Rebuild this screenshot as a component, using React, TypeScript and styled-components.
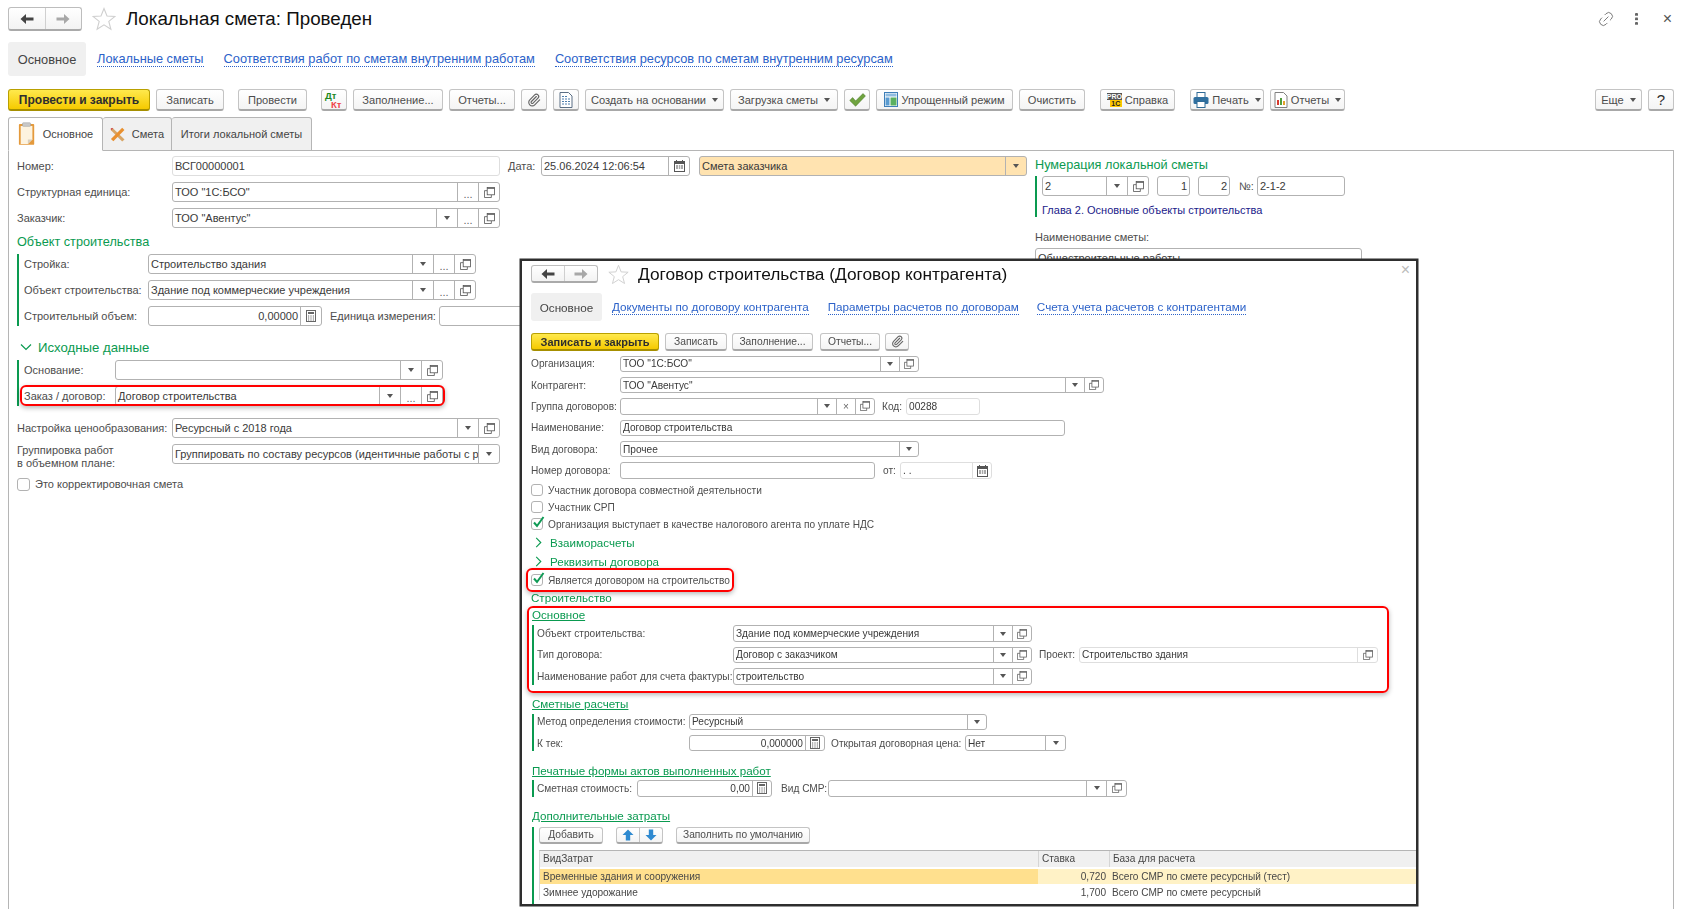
import React from "react";
import styled, { createGlobalStyle } from "styled-components";
import { Link2, Paperclip } from "lucide-react";

const GlobalStyle = createGlobalStyle`
  html, body {
    margin: 0;
    padding: 0;
    background: #fff;
    overflow: hidden;
  }
  * {
    box-sizing: border-box;
  }
  body {
    font-family: "Liberation Sans", Arial, sans-serif;
    color: #444;
  }
`;

/* ---------- icons ---------- */

const ArrowLeft = ({ color = "#444" }: { color?: string }) => (
  <svg width="14" height="12" viewBox="0 0 14 12">
    <path d="M0.5 6 L6 1 V4.4 H13.5 V7.6 H6 V11 Z" fill={color} />
  </svg>
);

const ArrowRight = () => (
  <svg width="14" height="12" viewBox="0 0 14 12">
    <path d="M13.5 6 L8 1 V4.4 H0.5 V7.6 H8 V11 Z" fill="#a8a8a8" />
  </svg>
);

const StarIcon = ({ size }: { size: number }) => (
  <svg width={size} height={size} viewBox="0 0 24 24">
    <path
      d="M12 1.5 L15 9 L23 9.4 L16.8 14.4 L18.9 22.3 L12 17.9 L5.1 22.3 L7.2 14.4 L1 9.4 L9 9 Z"
      fill="#fff"
      stroke="#cfcfcf"
      strokeWidth="1.1"
    />
  </svg>
);

const CopyIcon = ({ size }: { size: number }) => (
  <svg width={size} height={size} viewBox="0 0 12 12" fill="none" stroke="#555" strokeWidth="0.9">
    <path d="M3.5 4 H0.5 V11.5 H8 V8.5" />
    <rect x="3.5" y="0.5" width="8" height="8" fill="#fff" />
    <path d="M3.5 1.6 H11.5" />
  </svg>
);

const CalendarIcon = () => (
  <svg width="11" height="12" viewBox="0 0 11 12">
    <rect x="0.5" y="1.5" width="10" height="10" fill="#fff" stroke="#555" />
    <rect x="1" y="2" width="9" height="2" fill="#555" />
    <path d="M2.5 0 V2.5 M8.5 0 V2.5" stroke="#555" />
    <path d="M2 6 H4 M4.8 6 H6.3 M7 6 H9 M2 8 H4 M4.8 8 H6.3 M7 8 H9" stroke="#555" />
  </svg>
);

const CalcIcon = () => (
  <svg width="10" height="12" viewBox="0 0 10 12">
    <rect x="0.5" y="0.5" width="9" height="11" fill="#fff" stroke="#666" />
    <rect x="2" y="2" width="6" height="2" fill="#666" />
    <path d="M2 6 H3.2 M4.4 6 H5.6 M6.8 6 H8 M2 8 H3.2 M4.4 8 H5.6 M6.8 8 H8 M2 10 H3.2 M4.4 10 H5.6 M6.8 10 H8" stroke="#666" />
  </svg>
);

const ClipboardIcon = () => (
  <svg width="18" height="24" viewBox="0 0 20 26">
    <rect x="1" y="2" width="17" height="23" rx="1" fill="#e49a3c" />
    <path d="M3 4 H16 V19 L11 24 H3 Z" fill="#fdf3df" />
    <path d="M16 19 L11 24 V19 Z" fill="#d8cfc0" />
    <rect x="5" y="0.5" width="9" height="4" rx="1" fill="#c9c9c9" stroke="#9c9c9c" strokeWidth="0.6" />
  </svg>
);

const RulerCrossIcon = () => (
  <svg width="15" height="15" viewBox="0 0 16 16">
    <path d="M2.5 0.8 L15.5 13.2 L13 15.5 L0.5 3 Z" fill="#d8a565" />
    <path d="M13 0.8 L15.4 3.2 L3.6 15.2 L1 12.8 Z" fill="#e9902f" />
    <path d="M0.8 1 L3.6 1.4 L1.2 3.6 Z" fill="#d05252" />
  </svg>
);

const DocListIcon = () => (
  <svg width="14" height="16" viewBox="0 0 14 16">
    <path d="M1 0.5 H9.5 L13 4 V15.5 H1 Z" fill="#fff" stroke="#5b6f85" />
    <path d="M3 4.5 H8 M3 7 H11 M3 9.5 H11 M3 12 H11" stroke="#4f7fae" strokeDasharray="2 1" />
  </svg>
);

const CheckIcon = () => (
  <svg width="17" height="14" viewBox="0 0 17 14">
    <path d="M0.8 7.5 L3.6 4.6 L6.6 8 L14 0.6 L16.4 3 L6.6 13.2 Z" fill="#6fa33f" stroke="#4d7c2a" strokeWidth="0.6" />
  </svg>
);

const LayoutIcon = () => (
  <svg width="14" height="15" viewBox="0 0 14 15">
    <rect x="0.5" y="0.5" width="13" height="14" fill="#fff" stroke="#3f7fb8" />
    <rect x="1.5" y="1.5" width="11" height="3" fill="#8fbce0" />
    <rect x="1.5" y="5.5" width="4" height="8" fill="#5a9bd0" />
    <rect x="6.5" y="5.5" width="6" height="8" fill="#5bb060" />
  </svg>
);

const PrinterIcon = () => (
  <svg width="16" height="16" viewBox="0 0 16 16">
    <rect x="4" y="0.5" width="8" height="5" fill="#fff" stroke="#2f6a96" />
    <rect x="0.5" y="5" width="15" height="7" rx="1.5" fill="#2f6f9f" />
    <rect x="4" y="9.5" width="8" height="6" fill="#fff" stroke="#2f6a96" />
  </svg>
);

const ReportIcon = () => (
  <svg width="14" height="16" viewBox="0 0 14 16">
    <path d="M1 0.5 H9.5 L13 4 V15.5 H1 Z" fill="#fff" stroke="#808080" />
    <rect x="3" y="8" width="2" height="5" fill="#d83a2e" />
    <rect x="6" y="6" width="2" height="7" fill="#4f9e3c" />
    <rect x="9" y="9" width="2" height="4" fill="#e2a12b" />
  </svg>
);

const Chevron = ({ open, size }: { open?: boolean; size: number }) => (
  <svg width={size} height={size} viewBox="0 0 12 12" fill="none" stroke="#0a9a50" strokeWidth="1.2">
    <path d={open ? "M1 3.5 L6 8.5 L11 3.5" : "M3.5 1 L8.5 6 L3.5 11"} />
  </svg>
);

const ArrowVert = ({ up }: { up?: boolean }) => (
  <svg width="12" height="12" viewBox="0 0 12 12" style={{ transform: up ? "none" : "rotate(180deg)" }}>
    <path d="M6 0.5 L11.5 6 H8.2 V11.5 H3.8 V6 H0.5 Z" fill="#2f8ad0" />
  </svg>
);

/* ---------- shared parts ---------- */

const Page = styled.div`
  position: relative;
  width: 1692px;
  height: 909px;
  overflow: hidden;
  display: flex;
  flex-direction: column;
  padding: 0 18px 0 8px;
  font-size: 11px;
`;

const Header = styled.div<{ $modal?: boolean }>`
  display: flex;
  align-items: center;
  height: ${(p) => (p.$modal ? 18 : 24)}px;
  margin-top: ${(p) => (p.$modal ? 4 : 7)}px;
  flex-shrink: 0;
`;

const HistoryGroup = styled.div<{ $w: number }>`
  display: flex;
  width: ${(p) => p.$w}px;
  height: 100%;
  border: 1px solid #bdbdbd;
  border-bottom: 2px solid #aaa;
  border-radius: 3px;
  background: linear-gradient(#fff, #f3f3f3);
`;

const HistoryBtn = styled.div`
  flex: 1;
  display: flex;
  align-items: center;
  justify-content: center;
  & + & {
    border-left: 1px solid #d0d0d0;
  }
`;

const StarSlot = styled.div<{ $ml: number; $mr: number }>`
  display: flex;
  margin: 0 ${(p) => p.$mr}px 0 ${(p) => p.$ml}px;
`;

const Title = styled.div<{ $size: number }>`
  font-size: ${(p) => p.$size}px;
  color: #111;
  white-space: nowrap;
`;

const Utilities = styled.div`
  margin-left: auto;
  margin-right: 2px;
  display: flex;
  align-items: center;
  gap: 20px;
  color: #666;
`;

const DotsV = styled.div`
  width: 3px;
  height: 12px;
  margin-right: 5px;
  background: radial-gradient(circle at 1.5px 1.5px, #666 1.4px, transparent 1.6px) 0 0 / 3px 4.5px;
`;

const CloseMark = styled.div<{ $color?: string }>`
  font-size: 16px;
  line-height: 16px;
  color: ${(p) => p.$color || "#555"};
`;

const NavRow = styled.div<{ $modal?: boolean }>`
  display: flex;
  align-items: center;
  height: ${(p) => (p.$modal ? 28 : 34)}px;
  margin-top: ${(p) => (p.$modal ? 10 : 11)}px;
  font-size: ${(p) => (p.$modal ? 11.7 : 12.8)}px;
  flex-shrink: 0;
`;

const NavActive = styled.div<{ $w: number }>`
  width: ${(p) => p.$w}px;
  height: 100%;
  display: flex;
  align-items: center;
  justify-content: center;
  background: #f0f0f0;
  border-radius: 3px;
  color: #444;
`;

const NavLink = styled.a<{ $ml: number }>`
  margin-left: ${(p) => p.$ml}px;
  color: #2c62c9;
  border-bottom: 1px dotted #2c62c9;
  line-height: 14px;
  white-space: nowrap;
`;

const Toolbar = styled.div<{ $modal?: boolean }>`
  display: flex;
  height: ${(p) => (p.$modal ? 18 : 22)}px;
  margin-top: ${(p) => (p.$modal ? 12 : 13)}px;
  flex-shrink: 0;
`;

const Button = styled.div<{ $w: number; $ml?: number; $primary?: boolean; $size?: number; $strong?: boolean }>`
  width: ${(p) => p.$w}px;
  margin-left: ${(p) => (p.$ml === undefined ? 6 : p.$ml)}px;
  display: flex;
  align-items: center;
  justify-content: center;
  gap: 3px;
  flex-shrink: 0;
  white-space: nowrap;
  font-size: ${(p) => p.$size || 11.1}px;
  border-radius: 3px;
  border: 1px solid ${(p) => (p.$primary ? "#b9a000" : "#c4c4c4")};
  border-bottom: 2px solid ${(p) => (p.$primary ? "#a68f00" : "#a8a8a8")};
  background: ${(p) => (p.$primary ? "linear-gradient(#ffe94d, #f6ca00)" : "linear-gradient(#fff, #f4f4f4)")};
  color: ${(p) => (p.$primary || p.$strong ? "#2e2e2e" : "#4c4c4c")};
  font-weight: ${(p) => (p.$primary ? 700 : 400)};
`;

const Caret = styled.span`
  display: inline-block;
  width: 0;
  height: 0;
  margin-left: 3px;
  border-left: 3.5px solid transparent;
  border-right: 3.5px solid transparent;
  border-top: 4px solid #555;
`;

const DebitCredit = styled.div`
  width: 18px;
  height: 18px;
  font-size: 9.5px;
  line-height: 9px;
  font-weight: 700;
`;

const Debit = styled.div`
  color: #1d8a1d;
`;

const Credit = styled.div`
  color: #f0454a;
  padding-left: 6px;
`;

const HelpBadge = styled.div`
  display: flex;
  flex-direction: column;
  width: 15px;
  font-size: 7px;
  line-height: 7px;
  font-weight: 700;
  text-align: center;
`;

const HelpTop = styled.div`
  background: #555;
  color: #fff;
`;

const HelpBottom = styled.div`
  background: #ffc800;
  color: #222;
  margin-left: 3px;
`;

const Spacer = styled.div`
  flex: 1;
`;

/* ---------- tabs and panel ---------- */

const TabBar = styled.div`
  display: flex;
  height: 34px;
  margin-top: 6px;
  flex-shrink: 0;
  position: relative;
  z-index: 1;
`;

const Tab = styled.div<{ $w: number; $active?: boolean }>`
  width: ${(p) => p.$w}px;
  display: flex;
  align-items: center;
  justify-content: center;
  gap: 7px;
  border: 1px solid #b5b5b5;
  border-left-width: ${(p) => (p.$active ? 1 : 0)}px;
  border-bottom-color: ${(p) => (p.$active ? "#fff" : "#b5b5b5")};
  border-radius: 3px 3px 0 0;
  background: ${(p) => (p.$active ? "#fff" : "#f0f0f0")};
  white-space: nowrap;
`;

const Panel = styled.div`
  flex: 1;
  margin-top: -1px;
  display: flex;
  padding: 5px 0 0 8px;
  border: 1px solid #b5b5b5;
  border-bottom: none;
`;

const LeftCol = styled.div`
  width: 483px;
  flex-shrink: 0;
`;

const MidCol = styled.div`
  width: 519px;
  flex-shrink: 0;
  margin-left: 8px;
`;

const RightCol = styled.div`
  width: 330px;
  flex-shrink: 0;
  margin-left: 8px;
`;

const Row = styled.div<{ $modal?: boolean; $gap?: number; $top?: number }>`
  position: relative;
  display: flex;
  align-items: center;
  height: ${(p) => (p.$modal ? 16.4 : 20)}px;
  margin-top: ${(p) => p.$top || 0}px;
  margin-bottom: ${(p) => (p.$gap === undefined ? (p.$modal ? 5 : 6) : p.$gap)}px;
  &:last-child {
    margin-bottom: 0;
  }
`;

const Label = styled.div<{ $w?: number; $ml?: number }>`
  width: ${(p) => (p.$w ? `${p.$w}px` : "auto")};
  margin-left: ${(p) => p.$ml || 0}px;
  flex-shrink: 0;
  white-space: nowrap;
  color: #4d4d4d;
`;

const TwoLineLabel = styled(Label)`
  align-self: flex-start;
  line-height: 13px;
  height: 26px;
  white-space: pre-line;
`;

const FieldBox = styled.div<{ $w: number; $ml?: number; $light?: boolean; $fill?: string }>`
  width: ${(p) => p.$w}px;
  margin-left: ${(p) => p.$ml || 0}px;
  height: 100%;
  display: flex;
  flex-shrink: 0;
  border: 1px solid ${(p) => (p.$light ? "#dedede" : "#b2b2b2")};
  border-radius: 3px;
  background: ${(p) => p.$fill || "#fff"};
  overflow: hidden;
`;

const FieldText = styled.div<{ $right?: boolean }>`
  flex: 1;
  min-width: 0;
  padding: 0 2px;
  overflow: hidden;
  white-space: nowrap;
  text-align: ${(p) => (p.$right ? "right" : "left")};
  color: #3a3a3a;
  align-self: center;
`;

const FieldBtn = styled.div<{ $w: number; $light?: boolean }>`
  width: ${(p) => p.$w}px;
  flex-shrink: 0;
  display: flex;
  align-items: center;
  justify-content: center;
  border-left: 1px solid ${(p) => (p.$light ? "#dedede" : "#b2b2b2")};
  color: #666;
`;

const Dots = styled.span`
  font-size: 11px;
  line-height: 14px;
  padding-top: 3px;
`;

const FieldCaret = styled(Caret)`
  margin-left: 0;
`;

type BtnKind = "drop" | "dots" | "copy" | "cal" | "calc" | "clear";

type FieldProps = {
  w: number;
  ml?: number;
  value?: string;
  right?: boolean;
  light?: boolean;
  fill?: string;
  btn?: number;
  buttons?: BtnKind[];
};

const renderBtn = (kind: BtnKind, small: boolean) => {
  if (kind === "drop") return <FieldCaret />;
  if (kind === "dots") return <Dots>...</Dots>;
  if (kind === "copy") return <CopyIcon size={small ? 10 : 11} />;
  if (kind === "cal") return <CalendarIcon />;
  if (kind === "calc") return <CalcIcon />;
  return <span>×</span>;
};

const Field = ({ w, ml, value, right, light, fill, btn = 21, buttons = [] }: FieldProps) => (
  <FieldBox $w={w} $ml={ml} $light={light} $fill={fill}>
    <FieldText $right={right}>{value}</FieldText>
    {buttons.map((b) => (
      <FieldBtn key={b} $w={btn} $light={light}>
        {renderBtn(b, btn < 21)}
      </FieldBtn>
    ))}
  </FieldBox>
);

const SectionHead = styled.div<{ $mt?: number; $big?: boolean; $pb?: number }>`
  display: flex;
  align-items: center;
  gap: 6px;
  height: 20px;
  margin-top: ${(p) => p.$mt || 0}px;
  padding-left: ${(p) => (p.$big ? 3 : 0)}px;
  padding-bottom: ${(p) => p.$pb || 0}px;
  color: #0a9a50;
  font-size: ${(p) => (p.$big ? 13.2 : 12.7)}px;
`;

const BarGroup = styled.div<{ $grow?: boolean; $mt?: number; $pl?: number; $ml?: number }>`
  border-left: 2px solid #0a9a50;
  padding-left: ${(p) => (p.$pl === undefined ? 5 : p.$pl)}px;
  margin-top: ${(p) => p.$mt || 0}px;
  margin-left: ${(p) => p.$ml || 0}px;
  flex: ${(p) => (p.$grow ? 1 : "none")};
`;

const Highlight = styled.div<{ $t: number; $r: number; $b: number; $l: number; $w?: number; $mt?: number }>`
  position: relative;
  width: ${(p) => (p.$w ? `${p.$w}px` : "fit-content")};
  margin-top: ${(p) => p.$mt || 0}px;
  &::after {
    content: "";
    position: absolute;
    top: ${(p) => p.$t}px;
    right: ${(p) => p.$r}px;
    bottom: ${(p) => p.$b}px;
    left: ${(p) => p.$l}px;
    border: 2px solid #f00;
    border-radius: 6px;
    box-shadow: 0 2px 5px rgba(0, 0, 0, 0.28);
    pointer-events: none;
  }
`;

const CheckBox = styled.div<{ $size: number }>`
  width: ${(p) => p.$size}px;
  height: ${(p) => p.$size}px;
  position: relative;
  flex-shrink: 0;
  border: 1px solid #b2b2b2;
  border-radius: 3px;
  background: #fff;
`;

const CheckMark = styled.svg`
  position: absolute;
  left: 0;
  top: -3px;
`;

const CheckLine = styled.div<{ $gap: number; $h?: number; $mt?: number }>`
  display: flex;
  align-items: center;
  gap: ${(p) => p.$gap}px;
  height: ${(p) => p.$h || 17}px;
  margin-top: ${(p) => p.$mt || 0}px;
  white-space: nowrap;
  color: #4d4d4d;
`;

const ChapterText = styled.div`
  margin-top: 7px;
  height: 14px;
  line-height: 14px;
  color: #1b1b8a;
`;

const RightLabel = styled.div`
  margin-top: 14px;
  height: 16px;
  color: #4d4d4d;
`;

const NameBox = styled.div`
  margin-top: 1px;
  width: 327px;
  height: 20px;
  padding: 0 2px;
  line-height: 18px;
  border: 1px solid #b2b2b2;
  border-radius: 3px;
  color: #3a3a3a;
`;

/* ---------- contract window ---------- */

const Modal = styled.div`
  position: absolute;
  left: 520px;
  top: 259px;
  width: 898px;
  height: 647px;
  z-index: 5;
  display: flex;
  flex-direction: column;
  padding-left: 9px;
  overflow: hidden;
  background: #fff;
  border: 2px solid #2e2e2e;
  box-shadow: 0 0 0 0.5px #2e2e2e;
  font-size: 10.15px;
`;

const ModalClose = styled.div`
  position: absolute;
  right: 6px;
  top: 1px;
`;

const ModalBody = styled.div`
  flex: 1;
  display: flex;
  flex-direction: column;
  min-height: 0;
  filter: blur(0.35px);
`;

const RowStack = styled.div`
  margin-top: 4.5px;
  flex-shrink: 0;
`;

const ExpandLine = styled.div`
  display: flex;
  align-items: center;
  gap: 6px;
  height: 19px;
  padding-left: 2px;
  color: #0a9a50;
  font-size: 11.6px;
`;

const GreenTitle = styled.div<{ $mt?: number; $ml?: number }>`
  height: 16px;
  line-height: 16px;
  margin-top: ${(p) => p.$mt || 0}px;
  margin-left: ${(p) => p.$ml || 0}px;
  color: #0a9a50;
  font-size: 11.6px;
`;

const GreenLink = styled(GreenTitle)`
  width: fit-content;
  text-decoration: underline;
`;

const MiniBar = styled.div`
  display: flex;
  height: 17px;
  margin-left: 5px;
`;

const ArrowPair = styled.div`
  display: flex;
  width: 47px;
  margin-left: 13px;
  border: 1px solid #c4c4c4;
  border-bottom: 2px solid #a8a8a8;
  border-radius: 3px;
  background: linear-gradient(#fff, #f4f4f4);
`;

const ArrowCell = styled.div`
  flex: 1;
  display: flex;
  align-items: center;
  justify-content: center;
  & + & {
    border-left: 1px solid #c4c4c4;
  }
`;

const Table = styled.div`
  margin: 6px 0 0 5px;
  border-top: 1px solid #b5b5b5;
  border-left: 1px solid #d5d5d5;
  font-size: 10.1px;
`;

const TableRow = styled.div<{ $h: number; $mt?: number }>`
  display: grid;
  grid-template-columns: 498px 71px 1fr;
  height: ${(p) => p.$h}px;
  margin-top: ${(p) => p.$mt || 0}px;
`;

const Cell = styled.div<{ $bg?: string; $right?: boolean; $head?: boolean }>`
  display: flex;
  align-items: center;
  justify-content: ${(p) => (p.$right ? "flex-end" : "flex-start")};
  padding: 0 3px;
  background: ${(p) => p.$bg || "transparent"};
  border-left: ${(p) => (p.$head ? "1px solid #d5d5d5" : "none")};
  white-space: nowrap;
  color: #474747;
`;

const ContractWindow = () => (
  <Modal>
    <ModalClose>
      <CloseMark $color="#bbb">×</CloseMark>
    </ModalClose>
    <ModalBody>
      <Header $modal>
        <HistoryGroup $w={67}>
          <HistoryBtn>
            <ArrowLeft />
          </HistoryBtn>
          <HistoryBtn>
            <ArrowRight />
          </HistoryBtn>
        </HistoryGroup>
        <StarSlot $ml={10} $mr={9}>
          <StarIcon size={21} />
        </StarSlot>
        <Title $size={17.3}>Договор строительства (Договор контрагента)</Title>
      </Header>
      <NavRow $modal>
        <NavActive $w={71}>Основное</NavActive>
        <NavLink $ml={10}>Документы по договору контрагента</NavLink>
        <NavLink $ml={19}>Параметры расчетов по договорам</NavLink>
        <NavLink $ml={18}>Счета учета расчетов с контрагентами</NavLink>
      </NavRow>
      <Toolbar $modal>
        <Button $primary $w={128} $ml={0} $size={11}>
          Записать и закрыть
        </Button>
        <Button $w={62} $size={10.3}>Записать</Button>
        <Button $w={81} $ml={5} $size={10.3}>Заполнение...</Button>
        <Button $w={60} $ml={7} $size={10.3}>Отчеты...</Button>
        <Button $w={24} $ml={5}>
          <Paperclip size={13} color="#666" />
        </Button>
      </Toolbar>
      <RowStack>
        <Row $modal>
          <Label $w={89}>Организация:</Label>
          <Field w={299} btn={19} value={'ТОО "1С:БСО"'} buttons={["drop", "copy"]} />
        </Row>
        <Row $modal>
          <Label $w={89}>Контрагент:</Label>
          <Field w={484} btn={19} value={'ТОО "Авентус"'} buttons={["drop", "copy"]} />
        </Row>
        <Row $modal>
          <Label $w={89}>Группа договоров:</Label>
          <Field w={255} btn={19} buttons={["drop", "clear", "copy"]} />
          <Label $ml={7} $w={24}>Код:</Label>
          <Field w={74} light value="00288" />
        </Row>
        <Row $modal>
          <Label $w={89}>Наименование:</Label>
          <Field w={445} value="Договор строительства" />
        </Row>
        <Row $modal>
          <Label $w={89}>Вид договора:</Label>
          <Field w={299} btn={19} value="Прочее" buttons={["drop"]} />
        </Row>
        <Row $modal>
          <Label $w={89}>Номер договора:</Label>
          <Field w={255} />
          <Label $ml={8} $w={17}>от:</Label>
          <Field w={92} btn={19} light value="  .  ." buttons={["cal"]} />
        </Row>
      </RowStack>
      <CheckLine $gap={5} $mt={3}>
        <CheckBox $size={12} />
        Участник договора совместной деятельности
      </CheckLine>
      <CheckLine $gap={5}>
        <CheckBox $size={12} />
        Участник СРП
      </CheckLine>
      <CheckLine $gap={5}>
        <CheckBox $size={12}>
          <CheckMark width="13" height="13" viewBox="0 0 13 13">
            <path d="M2 6.5 L5 10 L11.5 1" fill="none" stroke="#0f9a55" strokeWidth="2" />
          </CheckMark>
        </CheckBox>
        Организация выступает в качестве налогового агента по уплате НДС
      </CheckLine>
      <ExpandLine>
        <Chevron size={11} />
        Взаиморасчеты
      </ExpandLine>
      <ExpandLine>
        <Chevron size={11} />
        Реквизиты договора
      </ExpandLine>
      <Highlight $t={-3.5} $r={-4} $b={-3.5} $l={-5} $mt={1}>
        <CheckLine $gap={5}>
          <CheckBox $size={12}>
            <CheckMark width="13" height="13" viewBox="0 0 13 13">
              <path d="M2 6.5 L5 10 L11.5 1" fill="none" stroke="#0f9a55" strokeWidth="2" />
            </CheckMark>
          </CheckBox>
          Является договором на строительство
        </CheckLine>
      </Highlight>
      <GreenTitle $mt={1.5}>Строительство</GreenTitle>
      <Highlight $t={-1} $r={-1} $b={-8} $l={-4} $w={857} $mt={1}>
        <GreenLink $ml={1}>Основное</GreenLink>
        <BarGroup $mt={2} $pl={3} $ml={1}>
          <Row $modal>
            <Label $w={196}>Объект строительства:</Label>
            <Field w={299} btn={19} value="Здание под коммерческие учреждения" buttons={["drop", "copy"]} />
          </Row>
          <Row $modal>
            <Label $w={196}>Тип договора:</Label>
            <Field w={299} btn={19} value="Договор с заказчиком" buttons={["drop", "copy"]} />
            <Label $ml={7} $w={40}>Проект:</Label>
            <Field w={299} btn={20} light value="Строительство здания" buttons={["copy"]} />
          </Row>
          <Row $modal>
            <Label $w={196}>Наименование работ для счета фактуры:</Label>
            <Field w={299} btn={19} value="строительство" buttons={["drop", "copy"]} />
          </Row>
        </BarGroup>
      </Highlight>
      <GreenLink $mt={11} $ml={1}>Сметные расчеты</GreenLink>
      <BarGroup $mt={2} $pl={3} $ml={1}>
        <Row $modal>
          <Label $w={152}>Метод определения стоимости:</Label>
          <Field w={298} btn={19} value="Ресурсный" buttons={["drop"]} />
        </Row>
        <Row $modal>
          <Label $w={152}>К тек:</Label>
          <Field w={136} btn={19} right value="0,000000" buttons={["calc"]} />
          <Label $ml={6} $w={134}>Открытая договорная цена:</Label>
          <Field w={101} btn={20} value="Нет" buttons={["drop"]} />
        </Row>
      </BarGroup>
      <GreenLink $mt={12} $ml={1}>Печатные формы актов выполненных работ</GreenLink>
      <BarGroup $mt={1} $pl={3} $ml={1}>
        <Row $modal>
          <Label $w={100}>Сметная стоимость:</Label>
          <Field w={135} btn={19} right value="0,00" buttons={["calc"]} />
          <Label $ml={9} $w={47}>Вид СМР:</Label>
          <Field w={299} btn={20} buttons={["drop", "copy"]} />
        </Row>
      </BarGroup>
      <GreenLink $mt={11} $ml={1}>Дополнительные затраты</GreenLink>
      <BarGroup $grow $mt={3} $pl={0} $ml={1}>
        <MiniBar>
          <Button $w={64} $ml={0} $size={10.3}>Добавить</Button>
          <ArrowPair>
            <ArrowCell>
              <ArrowVert up />
            </ArrowCell>
            <ArrowCell>
              <ArrowVert />
            </ArrowCell>
          </ArrowPair>
          <Button $w={134} $ml={13} $size={10.2}>Заполнить по умолчанию</Button>
        </MiniBar>
        <Table>
          <TableRow $h={16}>
            <Cell $bg="#f0f0f0">ВидЗатрат</Cell>
            <Cell $bg="#f0f0f0" $head>Ставка</Cell>
            <Cell $bg="#f0f0f0" $head>База для расчета</Cell>
          </TableRow>
          <TableRow $h={15} $mt={2}>
            <Cell $bg="#ffe08e">Временные здания и сооружения</Cell>
            <Cell $bg="#fff2c6" $right>0,720</Cell>
            <Cell $bg="#fff2c6">Всего СМР по смете ресурсный (тест)</Cell>
          </TableRow>
          <TableRow $h={15} $mt={1}>
            <Cell>Зимнее удорожание</Cell>
            <Cell $right>1,700</Cell>
            <Cell>Всего СМР по смете ресурсный</Cell>
          </TableRow>
        </Table>
      </BarGroup>
    </ModalBody>
  </Modal>
);

/* ---------- page ---------- */

export default function App() {
  return (
    <Page>
      <GlobalStyle />
      <Header>
        <HistoryGroup $w={74}>
          <HistoryBtn>
            <ArrowLeft />
          </HistoryBtn>
          <HistoryBtn>
            <ArrowRight />
          </HistoryBtn>
        </HistoryGroup>
        <StarSlot $ml={10} $mr={10}>
          <StarIcon size={24} />
        </StarSlot>
        <Title $size={18.8}>Локальная смета: Проведен</Title>
        <Utilities>
          <Link2 size={18} color="#777" strokeWidth={1.2} style={{ transform: "rotate(-45deg)" }} />
          <DotsV />
          <CloseMark>×</CloseMark>
        </Utilities>
      </Header>
      <NavRow>
        <NavActive $w={78}>Основное</NavActive>
        <NavLink $ml={11}>Локальные сметы</NavLink>
        <NavLink $ml={20}>Соответствия работ по сметам внутренним работам</NavLink>
        <NavLink $ml={20}>Соответствия ресурсов по сметам внутренним ресурсам</NavLink>
      </NavRow>
      <Toolbar>
        <Button $primary $w={142} $ml={0} $size={12}>Провести и закрыть</Button>
        <Button $w={68}>Записать</Button>
        <Button $w={69} $ml={14}>Провести</Button>
        <Button $w={26} $ml={14}>
          <DebitCredit>
            <Debit>Дт</Debit>
            <Credit>Кт</Credit>
          </DebitCredit>
        </Button>
        <Button $w={90}>Заполнение...</Button>
        <Button $w={66}>Отчеты...</Button>
        <Button $w={26}>
          <Paperclip size={14} color="#666" />
        </Button>
        <Button $w={26}>
          <DocListIcon />
        </Button>
        <Button $w={139}>
          Создать на основании
          <Caret />
        </Button>
        <Button $w={108}>
          Загрузка сметы
          <Caret />
        </Button>
        <Button $w={26}>
          <CheckIcon />
        </Button>
        <Button $w={137}>
          <LayoutIcon />
          Упрощенный режим
        </Button>
        <Button $w={66}>Очистить</Button>
        <Button $w={75} $ml={15}>
          <HelpBadge>
            <HelpTop>PRO</HelpTop>
            <HelpBottom>1C</HelpBottom>
          </HelpBadge>
          Справка
        </Button>
        <Button $w={74} $ml={15}>
          <PrinterIcon />
          Печать
          <Caret />
        </Button>
        <Button $w={75}>
          <ReportIcon />
          Отчеты
          <Caret />
        </Button>
        <Spacer />
        <Button $w={47}>
          Еще
          <Caret />
        </Button>
        <Button $w={26} $size={15} $strong>?</Button>
      </Toolbar>
      <TabBar>
        <Tab $active $w={95}>
          <ClipboardIcon />
          Основное
        </Tab>
        <Tab $w={69}>
          <RulerCrossIcon />
          Смета
        </Tab>
        <Tab $w={140}>Итоги локальной сметы</Tab>
      </TabBar>
      <Panel>
        <LeftCol>
          <Row>
            <Label $w={155}>Номер:</Label>
            <Field w={328} light value="ВСГ00000001" />
          </Row>
          <Row>
            <Label $w={155}>Структурная единица:</Label>
            <Field w={328} value={'ТОО "1С:БСО"'} buttons={["dots", "copy"]} />
          </Row>
          <Row $gap={0}>
            <Label $w={155}>Заказчик:</Label>
            <Field w={328} value={'ТОО "Авентус"'} buttons={["drop", "dots", "copy"]} />
          </Row>
          <SectionHead $mt={4}>Объект строительства</SectionHead>
          <BarGroup $mt={2}>
            <Row>
              <Label $w={124}>Стройка:</Label>
              <Field w={328} value="Строительство здания" buttons={["drop", "dots", "copy"]} />
            </Row>
            <Row>
              <Label $w={124}>Объект строительства:</Label>
              <Field w={328} value="Здание под коммерческие учреждения" buttons={["drop", "dots", "copy"]} />
            </Row>
            <Row>
              <Label $w={124}>Строительный объем:</Label>
              <Field w={174} right value="0,00000" buttons={["calc"]} />
              <Label $ml={8} $w={109}>Единица измерения:</Label>
              <Field w={100} />
            </Row>
          </BarGroup>
          <SectionHead $mt={11} $big>
            <Chevron open size={12} />
            Исходные данные
          </SectionHead>
          <BarGroup $mt={3}>
            <Row>
              <Label $w={91}>Основание:</Label>
              <Field w={328} buttons={["drop", "copy"]} />
            </Row>
            <Highlight $t={-1} $r={-2} $b={0} $l={-4} $w={419}>
              <Row>
                <Label $w={91}>Заказ / договор:</Label>
                <Field w={328} value="Договор строительства" buttons={["drop", "dots", "copy"]} />
              </Row>
            </Highlight>
          </BarGroup>
          <Row $top={12}>
            <Label $w={155}>Настройка ценообразования:</Label>
            <Field w={328} value="Ресурсный с 2018 года" buttons={["drop", "copy"]} />
          </Row>
          <Row $gap={0}>
            <TwoLineLabel $w={155}>{"Группировка работ\nв объемном плане:"}</TwoLineLabel>
            <Field w={328} value="Группировать по составу ресурсов (идентичные работы с р" buttons={["drop"]} />
          </Row>
          <CheckLine $gap={5} $mt={13} $h={14}>
            <CheckBox $size={13} />
            Это корректировочная смета
          </CheckLine>
        </LeftCol>
        <MidCol>
          <Row>
            <Label $w={33}>Дата:</Label>
            <Field w={149} value="25.06.2024 12:06:54" buttons={["cal"]} />
            <Field w={328} ml={9} fill="#ffe3b0" value="Смета заказчика" buttons={["drop"]} />
          </Row>
        </MidCol>
        <RightCol>
          <SectionHead $pb={3}>Нумерация локальной сметы</SectionHead>
          <BarGroup>
            <Row $gap={0}>
              <Field w={107} value="2" buttons={["drop", "copy"]} />
              <Field w={33} ml={8} right value="1" />
              <Field w={32} ml={8} right value="2" />
              <Label $ml={9} $w={18}>№:</Label>
              <Field w={88} value="2-1-2" />
            </Row>
            <ChapterText>Глава 2. Основные объекты строительства</ChapterText>
          </BarGroup>
          <RightLabel>Наименование сметы:</RightLabel>
          <NameBox>Общестроительные работы</NameBox>
        </RightCol>
      </Panel>
      <ContractWindow />
    </Page>
  );
}
